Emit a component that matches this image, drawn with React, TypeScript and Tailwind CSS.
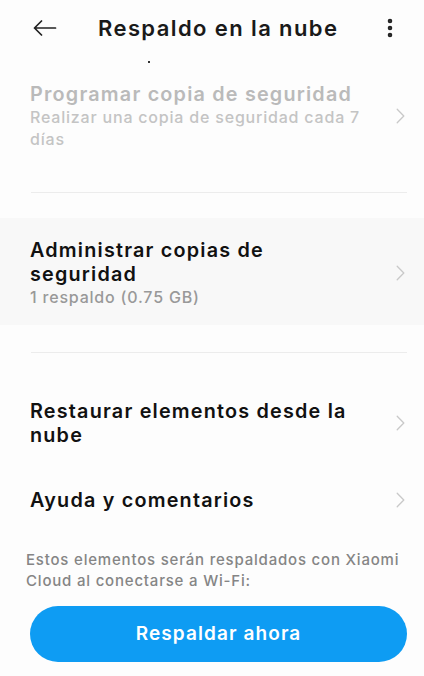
import { EllipsisVertical } from 'lucide-react';

interface RowProps {
  title: string[];
  subtitle?: string[];
  disabled?: boolean;
  pressed?: boolean;
  className?: string;
}

function Chevron() {
  return (
    <svg width="9" height="16" viewBox="0 0 9 16" fill="none" stroke="#c9c9c9" strokeWidth="1.3" strokeLinecap="round" strokeLinejoin="round">
      <path d="M1.2 1.2 7.8 8l-6.6 6.8" />
    </svg>
  );
}

function Row({ title, subtitle, disabled, pressed, className = '' }: RowProps) {
  return (
    <div
      className={`flex items-center pl-[30px] pr-[19px] ${pressed ? 'bg-[#f8f8f8]' : ''} ${className}`}
    >
      <div className="min-w-0 flex-1">
        {title.map((line) => (
          <p
            key={line}
            className={`text-[19.8px] leading-[24px] font-semibold tracking-[1.2px] whitespace-nowrap ${disabled ? 'text-[#bababa]' : 'text-[#111]'}`}
          >
            {line}
          </p>
        ))}
        {subtitle?.map((line) => (
          <p
            key={line}
            className={`text-[16px] leading-[22px] font-medium tracking-[0.8px] whitespace-nowrap ${disabled ? 'text-[#c4c4c4]' : 'text-[#999]'}`}
          >
            {line}
          </p>
        ))}
      </div>
      <Chevron />
    </div>
  );
}

export default function App() {
  return (
    <div
      className="flex h-[676px] w-[424px] flex-col bg-[#fdfdfd]"
      style={{ fontFamily: 'Inter, "Open Sans", sans-serif' }}
    >
      {/* cabecera */}
      <header className="flex h-[56px] shrink-0 items-center pl-[33px] pr-[22px]">
        <svg width="24" height="16" viewBox="0 0 24 16" fill="none" stroke="#222" strokeWidth="1.7" strokeLinecap="round" strokeLinejoin="round">
          <path d="M1.5 8h21M8.5 1 1.5 8l7 7" />
        </svg>
        <h1 className="ml-[41px] flex-1 text-[22px] font-semibold tracking-[1.4px] text-[#1a1a1a]">
          Respaldo en la nube
        </h1>
        <EllipsisVertical className="h-6 w-6 text-[#222]" strokeWidth={2.6} />
      </header>

      <div className="h-[26px] shrink-0 pl-[148px]">
        <span className="mt-[5px] block h-[2px] w-[2px] bg-[#333]" />
      </div>

      <Row
        disabled
        title={['Programar copia de seguridad']}
        subtitle={['Realizar una copia de seguridad cada 7', 'días']}
      />

      <div className="mt-[42px] ml-[31px] mr-[17px] h-px shrink-0 bg-[#ececec]" />

      <Row
        pressed
        title={['Administrar copias de', 'seguridad']}
        subtitle={['1 respaldo (0.75 GB)']}
        className="mt-[25px] pt-[20px] pb-[17px]"
      />

      <div className="mt-[27px] ml-[31px] mr-[17px] h-px shrink-0 bg-[#ececec]" />

      <Row title={['Restaurar elementos desde la', 'nube']} className="mt-[46px]" />

      <Row title={['Ayuda y comentarios']} className="mt-[41px]" />

      <p className="mt-[37px] pl-[26px] pr-[18px] text-[15px] leading-[21px] font-medium tracking-[0.8px] text-[#858585]">
        Estos elementos serán respaldados con Xiaomi Cloud al conectarse a Wi-Fi:
      </p>

      <div className="mt-[15px] pl-[30px] pr-[17px]">
        <button
          type="button"
          className="flex h-[56px] w-full items-center justify-center rounded-full bg-[#0e9cf3] text-[19px] font-semibold tracking-[1.1px] text-white"
        >
          Respaldar ahora
        </button>
      </div>
    </div>
  );
}
